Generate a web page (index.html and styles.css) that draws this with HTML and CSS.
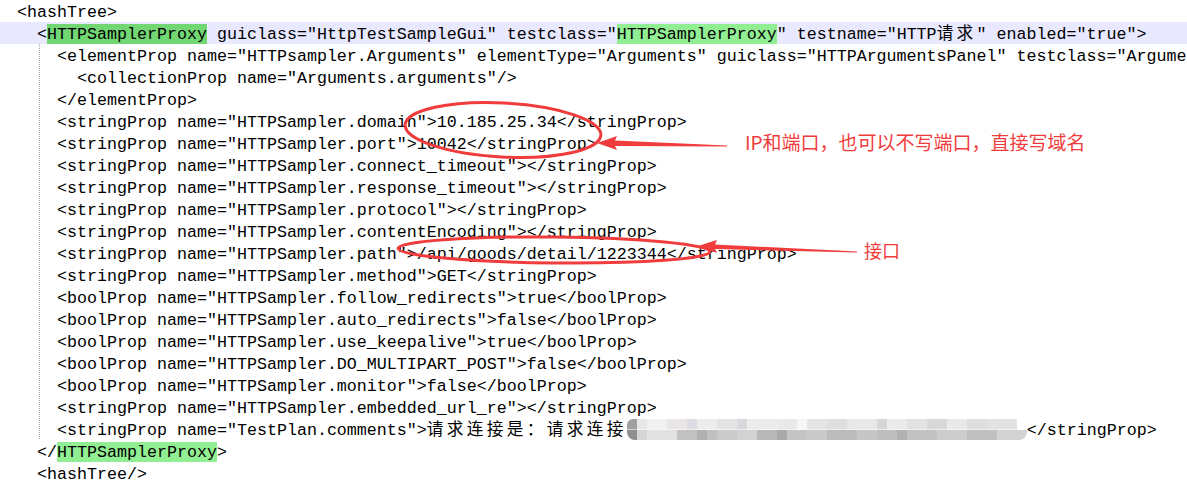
FILE: index.html
```html
<!DOCTYPE html>
<html lang="zh">
  <head>
    <meta charset="utf-8" />
    <title>hashTree</title>
    <link rel="stylesheet" href="styles.css">
  </head>
  <body>
    <div class="page">
      <div class="editor">
        <div class="line lv0">&lt;hashTree&gt;</div>
        <div class="line lv1 current">&lt;<span class="hl hl-sel">HTTPSamplerProxy</span> guiclass="HttpTestSampleGui" testclass="<span class="hl">HTTPSamplerProxy</span>" testname="HTTP<span class="cjk">请求</span>" enabled="true"&gt;</div>
        <div class="fold">
          <div class="line lv2">&lt;elementProp name="HTTPsampler.Arguments" elementType="Arguments" guiclass="HTTPArgumentsPanel" testclass="Arguments" testname="User Defined Variables" enabled="true"&gt;</div>
          <div class="line lv3">&lt;collectionProp name="Arguments.arguments"/&gt;</div>
          <div class="line lv2">&lt;/elementProp&gt;</div>
          <div class="line lv2">&lt;stringProp name="HTTPSampler.domain"&gt;10.185.25.34&lt;/stringProp&gt;</div>
          <div class="line lv2">&lt;stringProp name="HTTPSampler.port"&gt;10042&lt;/stringProp&gt;</div>
          <div class="line lv2">&lt;stringProp name="HTTPSampler.connect_timeout"&gt;&lt;/stringProp&gt;</div>
          <div class="line lv2">&lt;stringProp name="HTTPSampler.response_timeout"&gt;&lt;/stringProp&gt;</div>
          <div class="line lv2">&lt;stringProp name="HTTPSampler.protocol"&gt;&lt;/stringProp&gt;</div>
          <div class="line lv2">&lt;stringProp name="HTTPSampler.contentEncoding"&gt;&lt;/stringProp&gt;</div>
          <div class="line lv2">&lt;stringProp name="HTTPSampler.path"&gt;/api/goods/detail/1223344&lt;/stringProp&gt;</div>
          <div class="line lv2">&lt;stringProp name="HTTPSampler.method"&gt;GET&lt;/stringProp&gt;</div>
          <div class="line lv2">&lt;boolProp name="HTTPSampler.follow_redirects"&gt;true&lt;/boolProp&gt;</div>
          <div class="line lv2">&lt;boolProp name="HTTPSampler.auto_redirects"&gt;false&lt;/boolProp&gt;</div>
          <div class="line lv2">&lt;boolProp name="HTTPSampler.use_keepalive"&gt;true&lt;/boolProp&gt;</div>
          <div class="line lv2">&lt;boolProp name="HTTPSampler.DO_MULTIPART_POST"&gt;false&lt;/boolProp&gt;</div>
          <div class="line lv2">&lt;boolProp name="HTTPSampler.monitor"&gt;false&lt;/boolProp&gt;</div>
          <div class="line lv2">&lt;stringProp name="HTTPSampler.embedded_url_re"&gt;&lt;/stringProp&gt;</div>
          <div class="line lv2">&lt;stringProp name="TestPlan.comments"&gt;<span class="cjk">请求连接是：请求连接</span><span class="mosaic"></span>&lt;/stringProp&gt;</div>
        </div>
        <div class="line lv1">&lt;/<span class="hl">HTTPSamplerProxy</span>&gt;</div>
        <div class="line lv1">&lt;hashTree/&gt;</div>
      </div>

      <!-- red marks drawn over the code -->
      <div class="notes">
        <svg class="marks" width="1187" height="485" viewBox="0 0 1187 485">
          <ellipse cx="503" cy="130" rx="98" ry="27" transform="rotate(3 503 130)" fill="none" stroke="#f03c3c" stroke-width="3" />
          <path d="M597 143 L617 136 L615 140.5 L727 145.5 L727 146.5 L615 146 L617 150 Z" fill="#f03c3c" />
          <ellipse cx="554" cy="250" rx="156" ry="13" transform="rotate(0.6 554 250)" fill="none" stroke="#f03c3c" stroke-width="3" />
          <path d="M698 246 L717 240 L715 244.5 L857 251.5 L857 252.5 L715 249 L717 253 Z" fill="#f03c3c" />
        </svg>
        <span class="note note-ip">IP和端口，也可以不写端口，直接写域名</span>
        <span class="note note-api">接口</span>
      </div>
    </div>
  </body>
</html>
```

FILE: styles.css
```css
* {
  margin: 0;
  padding: 0;
  box-sizing: border-box;
}

body {
  background: #fff;
}

.page {
  position: relative;
  width: 1187px;
  height: 485px;
  overflow: hidden;
}

.editor {
  font-family: 'Liberation Mono', 'Courier New', 'Noto Sans CJK SC', monospace;
  font-size: 16.67px;
  color: #000;
}

.line {
  height: 22px;
  padding-top: 4px;
  line-height: 18px;
  white-space: pre;
}

.lv0 {
  padding-left: 17px;
}
.lv1 {
  padding-left: 37px;
}
.lv2 {
  padding-left: 57px;
}
.lv3 {
  padding-left: 77px;
}

.line.current {
  background-color: #e8e8ff;
}

.hl {
  padding: 1px 0 0;
  background-color: #92ee92;
}

.hl.hl-sel {
  background-color: #72d672;
}

.cjk {
  font-family: 'Noto Sans CJK SC', sans-serif;
  line-height: 0;
  letter-spacing: 3.33px;
}

/* dotted fold guide */
.fold {
  background-image: repeating-linear-gradient(
    to bottom,
    #a8a8a8 0,
    #a8a8a8 1px,
    transparent 1px,
    transparent 2px
  );
  background-repeat: no-repeat;
  background-size: 1px 100%;
  background-position: 39px 0;
}

/* pixelated hidden part of the comment */
.mosaic {
  display: inline-block;
  width: 400px;
  height: 21px;
  margin-top: -3px;
  vertical-align: top;
  border-radius: 6px 0 8px 8px;
  background-image:
    linear-gradient(
      to right,
      #a0a0a0 0, #a0a0a0 10px,
      #e8e8ea 10px, #e8e8ea 20px,
      #f1f1f3 20px, #f1f1f3 40px,
      #ebe6e6 40px, #ebe6e6 60px,
      #dcdce2 60px, #dcdce2 70px,
      #ececee 70px, #ececee 90px,
      #e4e4e4 90px, #e4e4e4 110px,
      #d9d9dd 110px, #d9d9dd 120px,
      #ececec 120px, #ececec 150px,
      #e9e9eb 150px, #e9e9eb 170px,
      #f6f6f6 170px, #f6f6f6 180px,
      #e4e4e6 180px, #e4e4e6 200px,
      #dfdfe1 200px, #dfdfe1 220px,
      #e8e8e8 220px, #e8e8e8 250px,
      #d6d6d6 250px, #d6d6d6 260px,
      #ebebeb 260px, #ebebeb 280px,
      #e2e2e2 280px, #e2e2e2 300px,
      #d8d8d8 300px, #d8d8d8 320px,
      #e9e9e9 320px, #e9e9e9 340px,
      #dedede 340px, #dedede 360px,
      #e2e2e2 360px, #e2e2e2 390px,
      #fff 390px, #fff 400px
    ),
    linear-gradient(
      to right,
      #8f8f8f 0, #8f8f8f 10px,
      #d6d6d6 10px, #d6d6d6 20px,
      #e2e2e2 20px, #e2e2e2 50px,
      #c2c2c2 50px, #c2c2c2 70px,
      #b0b0b0 70px, #b0b0b0 80px,
      #c0c0c0 80px, #c0c0c0 90px,
      #cbcbcb 90px, #cbcbcb 110px,
      #d2d2d2 110px, #d2d2d2 130px,
      #b8b8b8 130px, #b8b8b8 150px,
      #a9a9a9 150px, #a9a9a9 160px,
      #c4c4c4 160px, #c4c4c4 180px,
      #cacaca 180px, #cacaca 200px,
      #bcbcbc 200px, #bcbcbc 230px,
      #c6c6c6 230px, #c6c6c6 250px,
      #bebebe 250px, #bebebe 270px,
      #b2b2b2 270px, #b2b2b2 280px,
      #c2c2c2 280px, #c2c2c2 310px,
      #cdcdcd 310px, #cdcdcd 340px,
      #c0c0c0 340px, #c0c0c0 370px,
      #d3d3d3 370px, #d3d3d3 400px
    );
  background-repeat: no-repeat;
  background-size: 100% 50%;
  background-position: 0 0, 0 100%;
}

.notes {
  position: absolute;
  top: 0;
  left: 0;
  width: 1187px;
  height: 485px;
  pointer-events: none;
}

.marks {
  display: block;
}

.note {
  position: absolute;
  font-family: 'Noto Sans CJK SC', 'Noto Sans', sans-serif;
  color: #f03c3c;
  white-space: nowrap;
}

.note-ip {
  left: 745px;
  top: 129px;
  font-size: 19px;
  line-height: 26px;
}

.note-api {
  left: 864px;
  top: 238px;
  font-size: 18px;
  line-height: 24px;
}
```
